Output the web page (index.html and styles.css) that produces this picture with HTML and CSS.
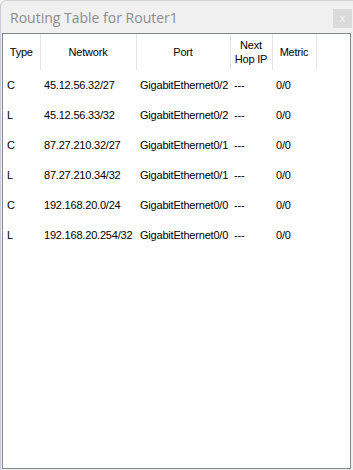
FILE: index.html
```html
<!DOCTYPE html>
<html>
<head>
<meta charset="utf-8">
<link rel="stylesheet" href="styles.css">
</head>
<body>
<div class="dialog">
  <div class="titlebar">
    <span class="title">Routing Table for Router1</span>
    <span class="close">x</span>
  </div>
  <div class="panel">
    <table class="routes">
      <colgroup>
        <col class="c-type"><col class="c-net"><col class="c-port"><col class="c-hop"><col class="c-metric"><col>
      </colgroup>
      <thead>
        <tr>
          <th class="left">Type</th>
          <th>Network</th>
          <th>Port</th>
          <th>Next<br>Hop IP</th>
          <th>Metric</th>
          <th class="blank"></th>
        </tr>
      </thead>
      <tbody>
        <tr><td class="t">C</td><td>45.12.56.32/27</td><td>GigabitEthernet0/2</td><td>---</td><td>0/0</td><td></td></tr>
        <tr><td class="t">L</td><td>45.12.56.33/32</td><td>GigabitEthernet0/2</td><td>---</td><td>0/0</td><td></td></tr>
        <tr><td class="t">C</td><td>87.27.210.32/27</td><td>GigabitEthernet0/1</td><td>---</td><td>0/0</td><td></td></tr>
        <tr><td class="t">L</td><td>87.27.210.34/32</td><td>GigabitEthernet0/1</td><td>---</td><td>0/0</td><td></td></tr>
        <tr><td class="t">C</td><td>192.168.20.0/24</td><td>GigabitEthernet0/0</td><td>---</td><td>0/0</td><td></td></tr>
        <tr><td class="t">L</td><td>192.168.20.254/32</td><td>GigabitEthernet0/0</td><td>---</td><td>0/0</td><td></td></tr>
      </tbody>
    </table>
  </div>
</div>
</body>
</html>
```
FILE: styles.css
```css
html, body {
  margin: 0;
  padding: 0;
  background: #ffffff;
}
body {
  width: 353px;
  height: 470px;
  overflow: hidden;
}
.dialog {
  box-sizing: border-box;
  width: 353px;
  height: 470px;
  background: #f0f0f0;
  border-left: 1px solid #c9ccd8;
  border-top: 1px solid #d4d4d4;
  border-top-left-radius: 6px;
  display: flex;
  flex-direction: column;
}
.titlebar {
  height: 32px;
  display: flex;
  align-items: flex-start;
  justify-content: space-between;
  box-sizing: border-box;
  padding: 8px 1px 0 9px;
}
.title {
  font-family: "Open Sans", "Noto Sans", sans-serif;
  font-size: 14px;
  color: #8c8c8c;
  line-height: 16px;
  margin-top: 1px;
}
.close {
  width: 19px;
  height: 19px;
  background: #dadada;
  color: #f2f2f2;
  font-family: "Liberation Sans", sans-serif;
  font-size: 11px;
  line-height: 18px;
  text-align: center;
}
.panel {
  margin-left: 1px;
  width: 349px;
  height: 436px;
  box-sizing: border-box;
  border: 1px solid #828790;
  background: #ffffff;
}
.routes {
  border-collapse: collapse;
  table-layout: fixed;
  width: 347px;
  font-family: "Liberation Sans", Arial, sans-serif;
  font-size: 11px;
  letter-spacing: -0.2px;
  color: #000000;
}
.c-type { width: 37px; }
.c-net { width: 96px; }
.c-port { width: 94px; }
.c-hop { width: 42px; }
.c-metric { width: 44px; }
.routes th {
  height: 36px;
  padding: 0;
  font-weight: normal;
  text-align: center;
  line-height: 14px;
  border-right: 1px solid #e5e5e5;
  vertical-align: middle;
}
.routes th.blank {
  border-right: none;
}
.routes td {
  height: 30px;
  padding: 0 0 0 4px;
  white-space: nowrap;
  overflow: hidden;
  vertical-align: middle;
  line-height: 14px;
}
```
